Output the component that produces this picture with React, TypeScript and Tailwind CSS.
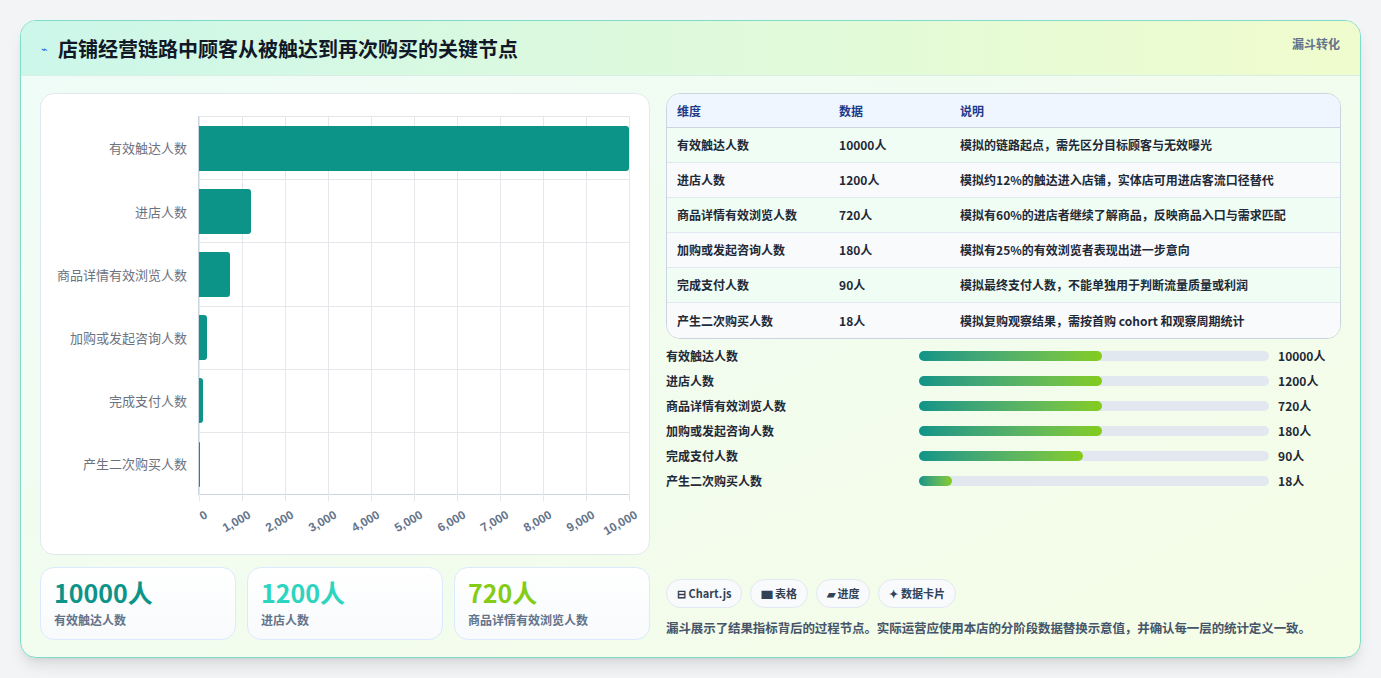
import React from "react";

const rows = [
  { n: "有效触达人数", v: 10000, d: "模拟的链路起点，需先区分目标顾客与无效曝光", p: 183 },
  { n: "进店人数", v: 1200, d: "模拟约12%的触达进入店铺，实体店可用进店客流口径替代", p: 183 },
  { n: "商品详情有效浏览人数", v: 720, d: "模拟有60%的进店者继续了解商品，反映商品入口与需求匹配", p: 183 },
  { n: "加购或发起咨询人数", v: 180, d: "模拟有25%的有效浏览者表现出进一步意向", p: 183 },
  { n: "完成支付人数", v: 90, d: "模拟最终支付人数，不能单独用于判断流量质量或利润", p: 164 },
  { n: "产生二次购买人数", v: 18, d: "模拟复购观察结果，需按首购 cohort 和观察周期统计", p: 33 },
];
const ticks = ["0", "1,000", "2,000", "3,000", "4,000", "5,000", "6,000", "7,000", "8,000", "9,000", "10,000"];
const font = { fontFamily: '"Noto Sans CJK SC", "Noto Sans", sans-serif' };

export default function App() {
  return (
    <div className="w-[1381px] h-[678px] bg-[#f3f4f6] pt-[20px] pl-[20px]" style={font}>
      <div className="w-[1341px] h-[638px] rounded-[16px] border border-[#7fdcc8] overflow-hidden bg-gradient-to-br from-[#effcf8] to-[#f5fde6] shadow-lg flex flex-col">
        <div className="h-[55px] shrink-0 flex items-start justify-between px-[20px] border-b border-[#d7efe4] bg-gradient-to-r from-[#ccf7ea] to-[#f0fccd]">
          <div className="flex items-center gap-[10px] h-[55px]">
            <span className="text-[11px] text-[#2563eb]">⌁</span>
            <span className="text-[20px] font-bold text-[#111827]">店铺经营链路中顾客从被触达到再次购买的关键节点</span>
          </div>
          <span className="mt-[14px] text-[12px] font-bold text-[#64748b]">漏斗转化</span>
        </div>
        <div className="flex gap-[16px] px-[19px] pt-[17px]">
          <div className="w-[611px] flex flex-col gap-[12px]">
            <div className="h-[462px] bg-white rounded-[14px] border border-[#e2e8f0] relative">
              <div className="absolute left-[157px] top-[22px] w-[431px] h-[379px] border-l border-b border-[#cbd5e1]">
                {ticks.map((t, i) => (
                  <div key={t} className="absolute top-0 h-[385px] border-l border-[#e5e7eb]" style={{ left: i * 43 }} />
                ))}
                {rows.map((r, i) => (
                  <div key={r.n} className="absolute left-0 w-full border-t border-[#e5e7eb] flex items-center" style={{ top: i * 63.2, height: 63.2 }}>
                    <div className="h-[45px] bg-[#0d9488] rounded-r-[3px]" style={{ width: Math.max(1, (r.v / 10000) * 430) }} />
                    <div className="absolute right-[442px] text-[13px] text-[#6b7280] whitespace-nowrap">{r.n}</div>
                  </div>
                ))}
                {ticks.map((t, i) => (
                  <div key={t} className="absolute top-[390px] text-[12px] font-bold text-[#64748b] whitespace-nowrap origin-top-right" style={{ right: 431 - i * 43 - 4, transform: "rotate(-30deg)", fontFamily: '"Liberation Sans", sans-serif' }}>{t}</div>
                ))}
              </div>
            </div>
            <div className="flex gap-[11px]">
              {[["10000人", "有效触达人数", "text-[#0d9488]"], ["1200人", "进店人数", "text-[#2dd4bf]"], ["720人", "商品详情有效浏览人数", "text-[#84cc16]"]].map(([a, b, c]) => (
                <div key={b} className="flex-1 h-[73px] rounded-[14px] border border-[#dbeafe] bg-gradient-to-b from-white to-[#f8fafc] px-[13px] pt-[8px]">
                  <div className={`text-[25px] font-bold leading-[32px] ${c}`}>{a}</div>
                  <div className="text-[12px] font-semibold text-[#64748b] mt-[3px]">{b}</div>
                </div>
              ))}
            </div>
          </div>
          <div className="w-[676px] flex flex-col">
            <div className="rounded-[14px] border border-[#cbd5e1] overflow-hidden text-[12px]">
              <div className="flex h-[34px] items-center bg-[#eff6ff] border-b border-[#cbd5e1] font-bold text-[#1e3a8a]">
                <div className="w-[172px] pl-[10px]">维度</div><div className="w-[121px]">数据</div><div>说明</div>
              </div>
              {rows.map((r, i) => (
                <div key={r.n} className={`flex h-[35px] items-center font-semibold text-[#1f2937] ${i < 5 ? "border-b border-[#e2e8f0]" : ""} ${i % 2 ? "bg-[#f8fafc]" : "bg-[#f0fdf4]"}`}>
                  <div className="w-[172px] pl-[10px]">{r.n}</div><div className="w-[121px]">{r.v}人</div><div>{r.d}</div>
                </div>
              ))}
            </div>
            <div className="mt-[8px] flex flex-col gap-[7px]">
              {rows.map((r) => (
                <div key={r.n} className="flex items-center h-[18px] text-[12px] font-semibold text-[#1f2937]">
                  <div className="w-[253px]">{r.n}</div>
                  <div className="w-[350px] h-[10px] rounded-full bg-[#e2e8f0]">
                    <div className="h-full rounded-full bg-gradient-to-r from-[#0d9488] to-[#84cc16]" style={{ width: r.p }} />
                  </div>
                  <div className="ml-[9px] font-bold">{r.v}人</div>
                </div>
              ))}
            </div>
            <div className="mt-[89px] flex gap-[8px]">
              {["⊟ Chart.js", "▆ 表格", "▰ 进度", "✦ 数据卡片"].map((c) => (
                <span key={c} className="h-[29px] px-[10px] rounded-full border border-[#e2e8f0] bg-[#f8fafc] text-[11px] font-bold text-[#334155] flex items-center">{c}</span>
              ))}
            </div>
            <div className="mt-[11px] text-[12.5px] font-semibold text-[#475569] whitespace-nowrap tracking-[-0.1px]">漏斗展示了结果指标背后的过程节点。实际运营应使用本店的分阶段数据替换示意值，并确认每一层的统计定义一致。</div>
          </div>
        </div>
      </div>
    </div>
  );
}
